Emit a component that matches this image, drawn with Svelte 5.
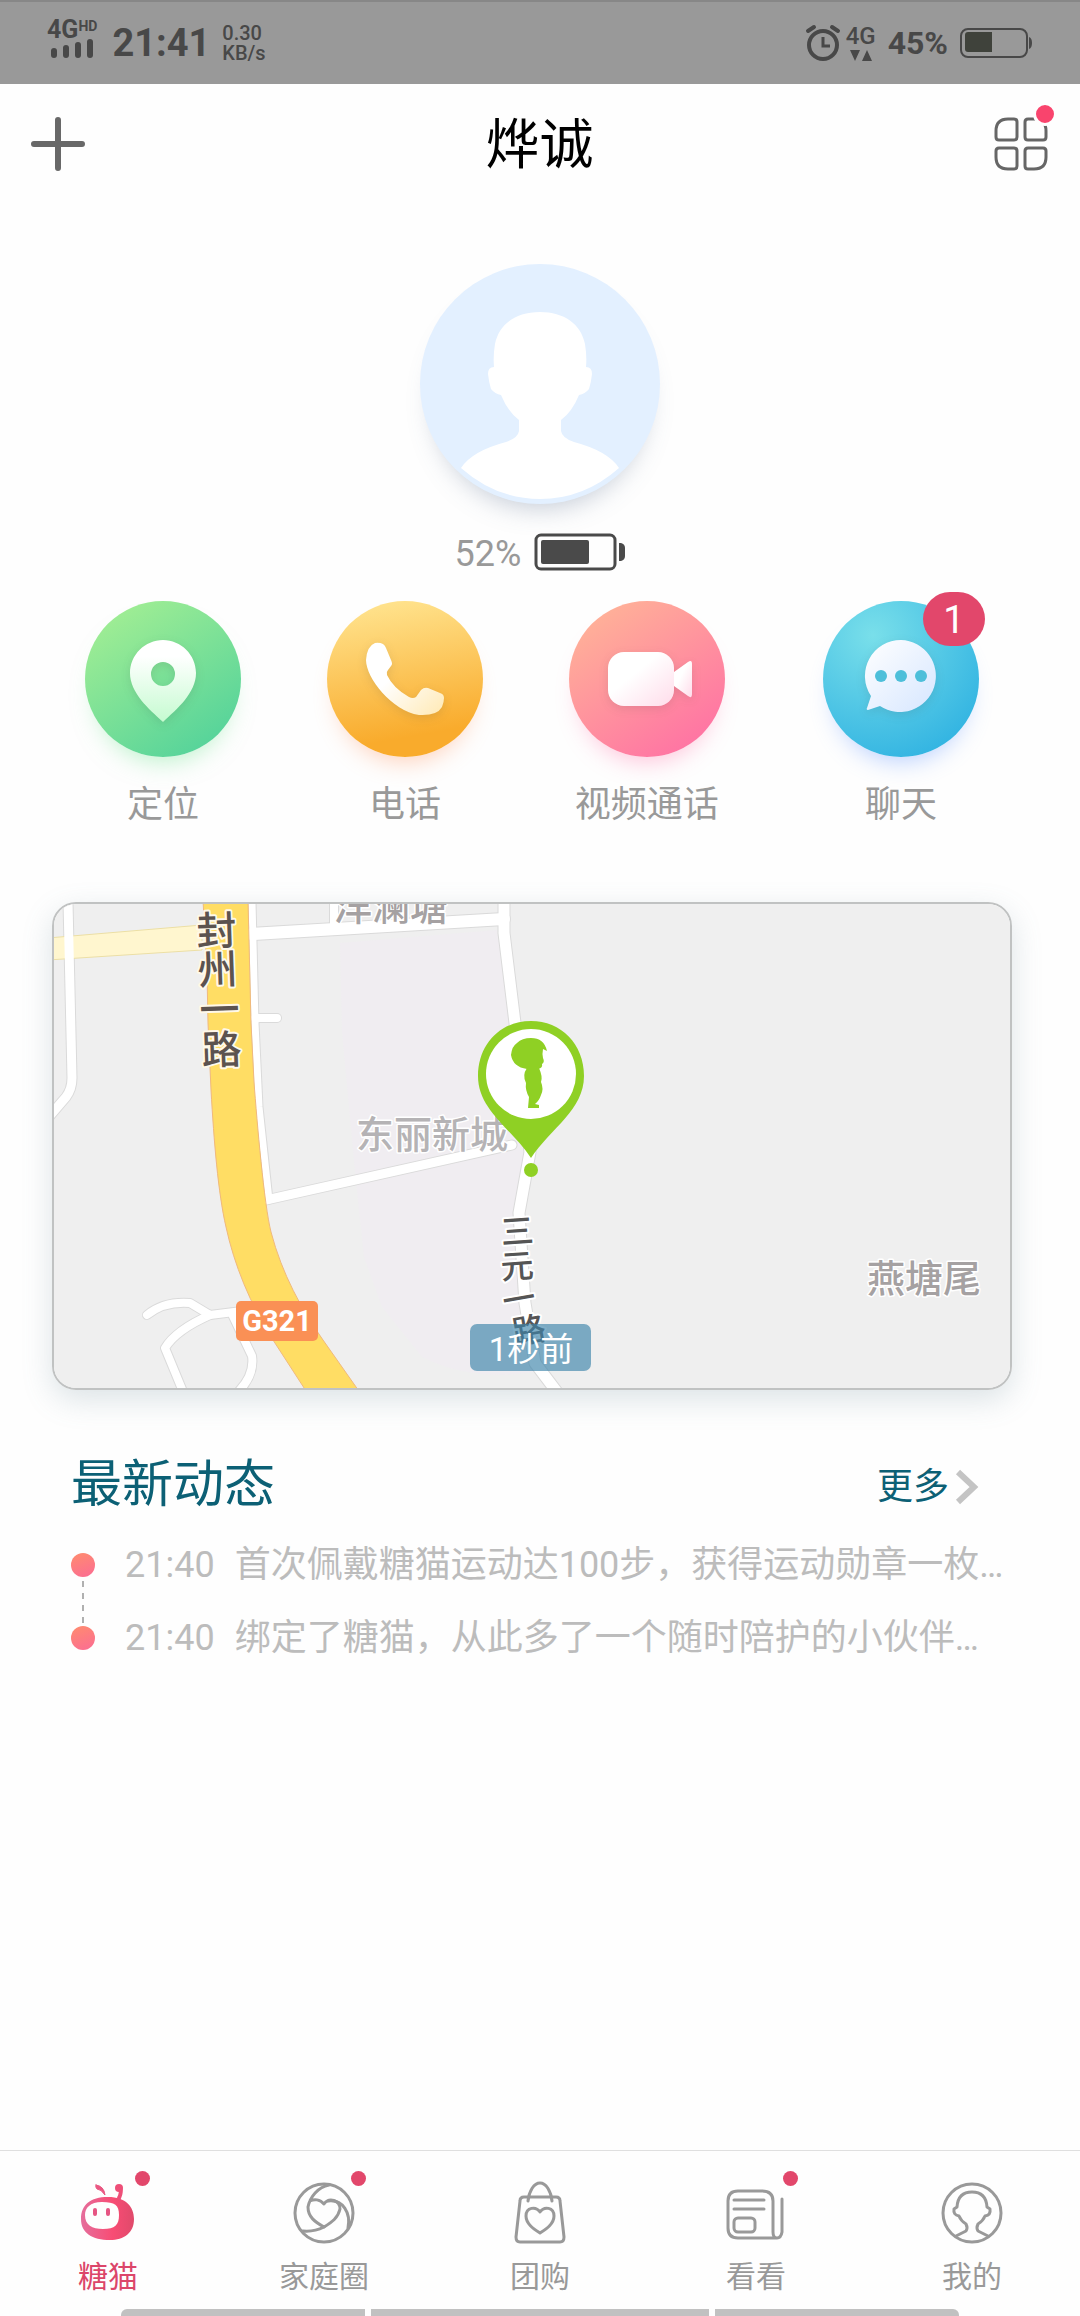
<script lang="ts">
	type Tab = { id: string; label: string; badge: boolean };
	type MapLabel = { text: string; x: number; y: number; rotate?: number; kind: string };

	const watchBattery = 52;

	const actions = [
		{ id: 'locate', label: '定位', count: 0 },
		{ id: 'phone', label: '电话', count: 0 },
		{ id: 'video', label: '视频通话', count: 0 },
		{ id: 'chat', label: '聊天', count: 1 }
	];

	const news = [
		{ time: '21:40', text: '首次佩戴糖猫运动达100步，获得运动勋章一枚…' },
		{ time: '21:40', text: '绑定了糖猫，从此多了一个随时陪护的小伙伴…' }
	];

	const tabs: Tab[] = [
		{ id: 'cat', label: '糖猫', badge: true },
		{ id: 'family', label: '家庭圈', badge: true },
		{ id: 'shop', label: '团购', badge: false },
		{ id: 'read', label: '看看', badge: true },
		{ id: 'me', label: '我的', badge: false }
	];

	// road names are set one character at a time, following the road
	const mapLabels: MapLabel[] = [
		{ text: '封', x: 165, y: 43, rotate: -2, kind: 'major' },
		{ text: '州', x: 166, y: 82, rotate: -2, kind: 'major' },
		{ text: '一', x: 168, y: 122, rotate: -2, kind: 'major' },
		{ text: '路', x: 170, y: 162, rotate: -2, kind: 'major' },
		{ text: '三', x: 466, y: 341, rotate: -4, kind: 'minor' },
		{ text: '元', x: 466, y: 376, rotate: -4, kind: 'minor' },
		{ text: '一', x: 469, y: 409, rotate: -10, kind: 'minor' },
		{ text: '路', x: 479, y: 440, rotate: -10, kind: 'minor' },
		{ text: '洋澜塘', x: 339, y: 18, kind: 'place' },
		{ text: '东丽新城', x: 380, y: 246, kind: 'area' },
		{ text: '燕塘尾', x: 872, y: 390, kind: 'place' }
	];

	const streets = [
		{ d: 'M16 0 L20 176 Q20 187 14 195 L-4 216', w: 9 },
		{ d: 'M203 116 H225', w: 8 },
		{ d: 'M200 0 L203 121 L207 205 L217 298', w: 7 },
		{ d: 'M282 0 V28', w: 8 },
		{ d: 'M200 32 L452 17', w: 12 },
		{ d: 'M214 298 L460 243', w: 9 },
		{ d: 'M452 -4 V31 L463 121 L478 250 L467 311 L473 401 L483 461 L508 494', w: 11 },
		{ d: 'M95 413 Q112 399 138 401 L158 413 L190 409', w: 8 },
		{ d: 'M158 413 Q124 428 113 446 L132 492', w: 8 },
		{ d: 'M180 412 L200 454 Q203 474 184 492', w: 8 }
	];

	let activeTab = $state('cat');
</script>

<div class="screen" lang="zh-CN">
	<div class="status">
		<div class="network">
			<div class="signal-name">4G<sup>HD</sup></div>
			<svg class="signal" viewBox="0 0 44 20" fill="none" stroke="#484848" stroke-width="6" stroke-linecap="round">
				<path d="M3 12V16M15 9V16M27 6V16M39 3V16" />
			</svg>
		</div>
		<div class="clock">21:41</div>
		<div class="speed"><span>0.30</span><span>KB/s</span></div>
		<div class="spacer"></div>
		<svg class="alarm" viewBox="0 0 34 38" fill="none" stroke="#484848">
			<circle cx="17" cy="21" r="14" stroke-width="4" />
			<path d="M17 13V22H24" stroke-width="3" />
			<path d="M2 7L8 3M32 7L26 3" stroke-width="4" stroke-linecap="round" />
		</svg>
		<div class="mobile">
			<span>4G</span>
			<svg viewBox="0 0 22 11" fill="#484848"><path d="M0 0H10L5 11ZM12 11H22L17 0Z" /></svg>
		</div>
		<div class="percent">45%</div>
		<svg class="phone-battery" viewBox="0 0 72 32">
			<rect x="1" y="2" width="66" height="28" rx="7" fill="none" stroke="#484848" stroke-width="2" />
			<path d="M8 5H32V25H8Q5 25 5 22V8Q5 5 8 5Z" fill="#3f423b" />
			<path d="M69 10Q72 11 72 16T69 22Z" fill="#484848" />
		</svg>
	</div>

	<header>
		<button class="icon-button" aria-label="添加">
			<svg viewBox="0 0 54 54" fill="none" stroke="#686868" stroke-width="6" stroke-linecap="round">
				<path d="M27 3V51M3 27H51" />
			</svg>
		</button>
		<h1>烨诚</h1>
		<button class="icon-button" aria-label="应用">
			<svg viewBox="0 0 54 54" fill="none" stroke="#666" stroke-width="3">
				<path d="M14 2H20Q23 2 23 5V20Q23 23 20 23H5Q2 23 2 20V14Q2 2 14 2Z" />
				<path d="M40 2H34Q31 2 31 5V20Q31 23 34 23H49Q52 23 52 20V14Q52 2 40 2Z" />
				<path d="M14 52H20Q23 52 23 49V34Q23 31 20 31H5Q2 31 2 34V40Q2 52 14 52Z" />
				<path d="M40 52H34Q31 52 31 49V34Q31 31 34 31H49Q52 31 52 34V40Q52 52 40 52Z" />
			</svg>
			<span class="dot header-dot"></span>
		</button>
	</header>

	<main>
		<section class="profile">
			<div class="avatar">
				<svg viewBox="0 0 240 240" fill="#fff">
					<path
						d="M120 48C96 48 79 60 75 80Q73 92 74 103Q68 103 68 110Q69 119 71 125Q75 130 81 131Q88 148 99 156V167Q98 174 86 178Q52 187 41 204Q76 235 120 235T199 204Q188 187 154 178Q142 174 141 167V156Q152 148 159 131Q165 130 169 125Q171 119 172 110Q172 103 166 103Q167 92 165 80C161 60 144 48 120 48Z"
					/>
				</svg>
			</div>
			<div class="watch">
				<span>{watchBattery}%</span>
				<svg viewBox="0 0 90 36">
					<rect x="1" y="1" width="79" height="34" rx="5" fill="none" stroke="#4a4a4a" stroke-width="3" />
					<rect x="6" y="6" width="48" height="24" rx="2" fill="#4a4a4a" />
					<path d="M84 9H86Q90 10 90 14V22Q90 26 86 27H84Z" fill="#4a4a4a" />
				</svg>
			</div>
		</section>

		<div class="actions">
			{#each actions as action (action.id)}
				<button class="action">
					<span class="bubble {action.id}">
						<svg viewBox="0 0 156 156">
							<defs>
								<linearGradient id="locate-shine" x1="0" y1="0" x2="0" y2="1">
									<stop offset="0.2" stop-color="#fff" />
									<stop offset="1" stop-color="#c5fbd0" />
								</linearGradient>
								<linearGradient id="phone-shine" x1="0" y1="0" x2="1" y2="1">
									<stop offset="0.4" stop-color="#fff" />
									<stop offset="1" stop-color="#ffe9b4" />
								</linearGradient>
								<linearGradient id="video-shine" x1="0" y1="0" x2="1" y2="1">
									<stop offset="0.4" stop-color="#fff" />
									<stop offset="1" stop-color="#ffdcea" />
								</linearGradient>
								<linearGradient id="chat-shine" x1="0" y1="0" x2="1" y2="1">
									<stop offset="0" stop-color="#fff" />
									<stop offset="1" stop-color="#d6e6ff" />
								</linearGradient>
							</defs>
							{#if action.id === 'locate'}
								<path
									fill="url(#locate-shine)"
									fill-rule="evenodd"
									d="M78 39C96 39 111 54 111 72C111 92 92 108 78 121C64 108 45 92 45 72C45 54 60 39 78 39ZM78 61A12 12 0 1 0 78 85A12 12 0 1 0 78 61Z"
								/>
							{:else if action.id === 'phone'}
								<path
									fill="url(#phone-shine)"
									d="M48 42Q40 45 39 59C39 77 65 110 92 114Q110 115 115 106Q117 101 117 97Q117 93 113 92L101 87Q97 86 94 89L89 96Q86 98 82 96Q66 87 60 74Q59 71 61 69L64 65Q66 63 64 59L59 47Q57 41 48 42Z"
								/>
							{:else if action.id === 'video'}
								<g fill="url(#video-shine)">
									<rect x="39" y="51" width="66" height="54" rx="16" />
									<path d="M105 71L119 61Q123 58 123 63V93Q123 98 119 95L105 85Z" />
								</g>
							{:else}
								<path
									fill="url(#chat-shine)"
									d="M78 39A36 36 0 1 1 57 105L45 109Q43 109 44 107L48 95A36 36 0 0 1 78 39Z"
								/>
								<g fill="#4dbfda">
									<circle cx="58" cy="75" r="6" />
									<circle cx="78" cy="75" r="6" />
									<circle cx="98" cy="75" r="6" />
								</g>
							{/if}
						</svg>
						{#if action.count}
							<span class="count">{action.count}</span>
						{/if}
					</span>
					<span class="action-label">{action.label}</span>
				</button>
			{/each}
		</div>

		<section class="map">
			<svg viewBox="2 2 956 484" preserveAspectRatio="xMidYMid slice">
				<rect width="960" height="488" fill="#efefef" />
				<path d="M288 41L445 28L478 250L467 311L473 401L483 470Q420 480 370 455L330 405L312 355L304 280L290 130Z" fill="#f0edf1" />

				{#each streets as s}
					<path d={s.d} class="casing" stroke-width={s.w + 2} />
				{/each}
				<path d="M-4 36L150 23V48L-4 58Z" fill="#fff6cf" stroke="#ecdfa5" />
				{#each streets as s}
					<path d={s.d} class="street" stroke-width={s.w} />
				{/each}
				<path
					d="M151 -2L155 71L156 121L159 188C162 240 166 290 174 325C182 362 198 402 221 438L256 492H309L271 438C250 408 230 372 219 330C212 302 205 220 202 180L199 121L196 -2Z"
					fill="#ffdd64"
					stroke="#f0b97c"
				/>

				<rect x="184" y="399" width="82" height="40" rx="5" fill="#fa9055" />
				<text class="shield" x="225" y="429">G321</text>

				{#each mapLabels as l}
					<text class={l.kind} x={l.x} y={l.y} transform={l.rotate ? `rotate(${l.rotate} ${l.x} ${l.y})` : undefined}>{l.text}</text>
				{/each}

				<g fill="#8fd024">
					<path d="M479 119C509 119 532 142 532 174C532 208 499 226 479 256C459 226 426 208 426 174C426 142 449 119 479 119Z" />
					<circle cx="479" cy="172" r="45" fill="#fff" />
					<path d="M465 141Q470 136 479 136Q492 136 495 149L491 147Q490 152 491 156Q493 160 490 162Q491 166 486 167H475Q461 165 459 153Q460 144 465 141Z" />
					<path d="M475 166H487Q491 175 489 180Q492 187 489 193Q487 199 483 202L487 203V206H476L477 195Q473 188 474 181Q470 173 475 166Z" />
					<circle cx="479" cy="268" r="7" />
				</g>

				<rect x="418" y="422" width="121" height="47" rx="7" fill="#3d84aa" fill-opacity="0.66" />
				<text class="ago" x="479" y="459">1秒前</text>
			</svg>
		</section>

		<section class="news">
			<div class="news-head">
				<h2>最新动态</h2>
				<a href="#more">
					更多
					<svg viewBox="0 0 24 36" fill="none" stroke="#c4c4c4" stroke-width="6"><path d="M3 3L19 18L3 33" /></svg>
				</a>
			</div>
			<ul>
				{#each news as item}
					<li>
						<span class="bullet"></span>
						<time>{item.time}</time>
						<span class="news-text">{item.text}</span>
					</li>
				{/each}
			</ul>
		</section>
	</main>

	<nav>
		<div class="tabs">
			{#each tabs as tab (tab.id)}
				<button class="tab" class:active={activeTab === tab.id} onclick={() => (activeTab = tab.id)}>
					<span class="tab-icon">
						<svg viewBox="0 0 60 60" fill="none" stroke="currentColor" stroke-width="3" stroke-linecap="round" stroke-linejoin="round">
							{#if tab.id === 'cat'}
								<defs>
									<linearGradient id="cat-pink" x1="0" y1="0" x2="1" y2="0">
										<stop offset="0" stop-color="#e56e9c" />
										<stop offset="0.6" stop-color="#f84c74" />
										<stop offset="1" stop-color="#e04a6b" />
									</linearGradient>
								</defs>
								<path
									fill="url(#cat-pink)"
									fill-rule="evenodd"
									stroke="none"
									d="M30 14C48 14 56 24 56 36C56 50 46 57 32 57C14 57 3 50 3 36C3 22 12 14 30 14ZM24 19C12 19 7 25 7 32C7 42 14 46 25 46C37 46 41 42 41 32C41 22 37 19 24 19Z"
								/>
								<path d="M17 27V31M30 27V31" stroke="#e65583" stroke-width="4" />
								<path d="M18 2Q26 3 27 12Q23 6 19 6Q17 4 18 2Z" fill="#ea5782" stroke="#ea5782" stroke-width="1" />
								<path d="M42 5Q44 9 41 15" stroke="#ee4f78" stroke-width="4" />
								<circle cx="41" cy="5" r="4" fill="#ee4f78" stroke="none" />
							{:else if tab.id === 'family'}
								<circle cx="30" cy="30" r="29" />
								<path d="M35 2C24 4 16 14 14 24C14 34 21 39 30 44C38 39 44 35 46 26C46 17 35 14 30 21C26 16 20 16 16 18" />
								<path d="M34 18C49 16 57 30 54 45M30 44Q20 49 9 48" />
							{:else if tab.id === 'shop'}
								<path d="M14 14H46Q50 14 50 18L54 54Q54 59 50 59H10Q6 59 6 54L10 18Q10 14 14 14Z" />
								<path d="M18 18C19 8 24 0 30 0S41 8 42 18" />
								<path d="M30 29C26 23 16 24 16 33C16 41 24 46 30 50C36 46 44 41 44 33C44 24 34 23 30 29Z" />
							{:else if tab.id === 'read'}
								<path d="M51 55H12Q2 55 2 45V18Q2 8 12 8H36Q47 8 47 18V49Q47 55 51 55T56 49V16" />
								<path d="M8 17H38M8 26H38" />
								<rect x="8" y="35" width="21" height="14" rx="4" />
							{:else}
								<circle cx="30" cy="30" r="29" />
								<path
									d="M14 53Q20 50 24 48Q26 45 24 41Q19 38 17 33Q11 32 12 26L15 24Q16 9 30 9T45 24L48 26Q49 32 43 33Q41 38 36 41Q34 45 36 48Q40 50 46 53"
								/>
							{/if}
						</svg>
						{#if tab.badge}
							<span class="dot"></span>
						{/if}
					</span>
					{tab.label}
				</button>
			{/each}
		</div>
		<div class="gestures"><span></span><span></span><span></span></div>
	</nav>
</div>

<style>
	:global(body) {
		margin: 0;
		background: #fefefe;
	}
	.screen {
		min-height: 100vh;
		display: flex;
		flex-direction: column;
		font-family: Roboto, 'Noto Sans CJK SC', sans-serif;
		font-weight: 400;
		color: #999;
	}
	svg {
		display: block;
		overflow: visible;
	}
	button {
		border: 0;
		padding: 0;
		background: none;
		font: inherit;
		color: inherit;
	}
	h1,
	h2,
	ul {
		margin: 0;
		padding: 0;
		font-weight: 400;
	}

	.status {
		box-sizing: border-box;
		height: 84px;
		padding: 0 48px 0 47px;
		border-top: 2px solid #878787;
		background: #999;
		color: #484848;
		display: flex;
		align-items: center;
		font-weight: 500;
	}
	.network {
		padding-bottom: 6px;
	}
	.signal-name {
		font-size: 25px;
		line-height: 18px;
		font-weight: 700;
		display: flex;
	}
	.signal-name sup {
		font-size: 14px;
		line-height: 10px;
		vertical-align: top;
	}
	.signal {
		width: 44px;
		height: 20px;
		margin-left: 4px;
	}
	.clock {
		margin-left: 15px;
		font-size: 38px;
		font-weight: 700;
	}
	.speed {
		margin-left: 12px;
		display: flex;
		flex-direction: column;
		font-size: 20px;
		line-height: 20px;
	}
	.spacer {
		flex: 1;
	}
	.alarm {
		width: 34px;
		height: 38px;
	}
	.mobile {
		margin: 0 12px 0 6px;
		display: flex;
		flex-direction: column;
		align-items: center;
		gap: 4px;
		font-size: 24px;
		line-height: 20px;
	}
	.mobile svg {
		width: 22px;
		height: 11px;
	}
	.percent {
		font-size: 32px;
		font-weight: 700;
	}
	.phone-battery {
		width: 72px;
		height: 32px;
		margin-left: 12px;
	}

	header {
		height: 120px;
		padding: 0 32px 0 31px;
		display: flex;
		align-items: center;
		justify-content: space-between;
	}
	h1 {
		padding-top: 4px;
		font-size: 54px;
		line-height: 64px;
		color: #000;
	}
	.icon-button {
		position: relative;
	}
	.icon-button svg {
		width: 54px;
		height: 54px;
	}
	.dot {
		position: absolute;
		width: 15px;
		height: 15px;
		border-radius: 50%;
		background: #e2476b;
		top: -12px;
		right: -12px;
	}
	.header-dot {
		width: 18px;
		height: 18px;
		top: -15px;
		right: -9px;
		border: 3px solid #fefefe;
		background: #f9446d;
	}

	main {
		flex: 1;
	}
	.profile {
		padding-top: 60px;
		display: flex;
		flex-direction: column;
		align-items: center;
	}
	.avatar {
		width: 240px;
		height: 240px;
		border-radius: 50%;
		background: #e3f0ff;
		box-shadow: 0 18px 26px -14px rgba(90, 110, 140, 0.35);
	}
	.watch {
		margin-top: 30px;
		height: 36px;
		display: flex;
		align-items: center;
		gap: 14px;
		font-size: 36px;
		line-height: 36px;
	}
	.watch span {
		padding-top: 4px;
	}
	.watch svg {
		width: 90px;
		height: 36px;
	}

	.actions {
		margin-top: 31px;
		padding: 0 46px 0 42px;
		display: grid;
		grid-template-columns: 1fr 1fr 1fr 1.1fr;
	}
	.action {
		display: flex;
		flex-direction: column;
		align-items: center;
		gap: 26px;
	}
	.bubble {
		position: relative;
		width: 156px;
		height: 156px;
		border-radius: 50%;
	}
	.bubble svg {
		filter: drop-shadow(0 3px 5px rgba(60, 60, 60, 0.12));
	}
	.locate {
		background: linear-gradient(145deg, #9cec94 15%, #4fd19b 95%);
		box-shadow: 0 16px 24px -12px rgba(120, 230, 150, 0.5);
	}
	.phone {
		background: linear-gradient(170deg, #ffe18a 8%, #f9ab2c 82%);
		box-shadow: 0 16px 24px -12px rgba(255, 150, 100, 0.45);
	}
	.video {
		background: linear-gradient(145deg, #ffb697 5%, #ff76a3 85%);
		box-shadow: 0 16px 24px -12px rgba(255, 120, 170, 0.45);
	}
	.chat {
		background: radial-gradient(circle at 32% 22%, #79dfea, #34b5e2 80%);
		box-shadow: 0 16px 24px -12px rgba(100, 150, 255, 0.45);
	}
	.count {
		position: absolute;
		top: -9px;
		right: -6px;
		width: 62px;
		height: 54px;
		border-radius: 27px;
		background: #e2476b;
		color: #fff;
		font-size: 38px;
		line-height: 56px;
		text-align: center;
	}
	.action-label {
		font-size: 36px;
		line-height: 44px;
	}

	.map {
		margin: 75px 68px 0 52px;
		border: 2px solid #c0c2c2;
		border-radius: 24px;
		overflow: hidden;
		box-shadow: 0 10px 30px rgba(100, 130, 145, 0.22);
	}
	.map svg {
		width: 100%;
		overflow: hidden;
	}
	.casing,
	.street {
		fill: none;
		stroke-linecap: round;
		stroke-linejoin: round;
	}
	.casing {
		stroke: #dadada;
	}
	.street {
		stroke: #fff;
	}
	.map text {
		text-anchor: middle;
		font-weight: 500;
		font-size: 38px;
		paint-order: stroke;
		stroke: #fff;
		stroke-width: 4px;
		stroke-linejoin: round;
	}
	.map .major {
		font-size: 40px;
		fill: #5c534f;
		stroke: #fff8e8;
	}
	.map .minor {
		font-size: 33px;
		fill: #555;
	}
	.map .place {
		fill: #a5a1a2;
		stroke-width: 3px;
	}
	.map .area {
		fill: #b5b3b5;
		stroke-width: 3px;
	}
	.map .shield {
		font-size: 29px;
		font-weight: 700;
		fill: #fff;
		stroke: none;
	}
	.map .ago {
		font-size: 33px;
		font-weight: 400;
		fill: #fff;
		stroke: none;
	}

	.news {
		padding: 64px 76px 0 71px;
	}
	.news-head {
		display: flex;
		align-items: center;
		justify-content: space-between;
		height: 60px;
	}
	h2 {
		padding-top: 2px;
		font-size: 51px;
		line-height: 60px;
		color: #0c6075;
	}
	.news-head a {
		display: flex;
		align-items: center;
		gap: 6px;
		margin-right: 25px;
		padding-top: 6px;
		font-size: 36px;
		line-height: 44px;
		color: #0c6075;
		text-decoration: none;
	}
	.news-head svg {
		width: 24px;
		height: 36px;
	}
	ul {
		margin-top: 14px;
		list-style: none;
	}
	li {
		height: 73px;
		display: flex;
		align-items: center;
		font-size: 36px;
		line-height: 52px;
		color: #bcbcbc;
	}
	.bullet {
		position: relative;
		flex: none;
		width: 24px;
		height: 24px;
		margin-right: 30px;
		border-radius: 50%;
		background: linear-gradient(160deg, #ff8c6e, #fb6c94);
	}
	li:not(:last-child) .bullet::after {
		content: '';
		position: absolute;
		left: 11px;
		top: 28px;
		width: 2px;
		height: 42px;
		background: repeating-linear-gradient(#b0b0b0 0 6px, transparent 6px 12px);
	}
	time {
		flex: none;
		margin-right: 20px;
	}
	.news-text {
		white-space: nowrap;
		overflow: hidden;
		text-overflow: ellipsis;
	}

	nav {
		border-top: 1px solid #dfdfdf;
		overflow: hidden;
	}
	.tabs {
		display: grid;
		grid-template-columns: repeat(5, 1fr);
		padding-top: 32px;
	}
	.tab {
		display: flex;
		flex-direction: column;
		align-items: center;
		gap: 14px;
		font-size: 30px;
		line-height: 40px;
	}
	.tab.active {
		color: #dc466a;
	}
	.tab-icon {
		position: relative;
	}
	.tab-icon svg {
		width: 60px;
		height: 60px;
	}
	.gestures {
		display: grid;
		grid-template-columns: 244fr 338fr 244fr;
		gap: 6px;
		height: 7px;
		margin: 12px 121px 0;
	}
	.gestures span {
		background: #c1c1c1;
	}
	.gestures span:first-child {
		border-top-left-radius: 6px;
	}
	.gestures span:last-child {
		border-top-right-radius: 6px;
	}
</style>
